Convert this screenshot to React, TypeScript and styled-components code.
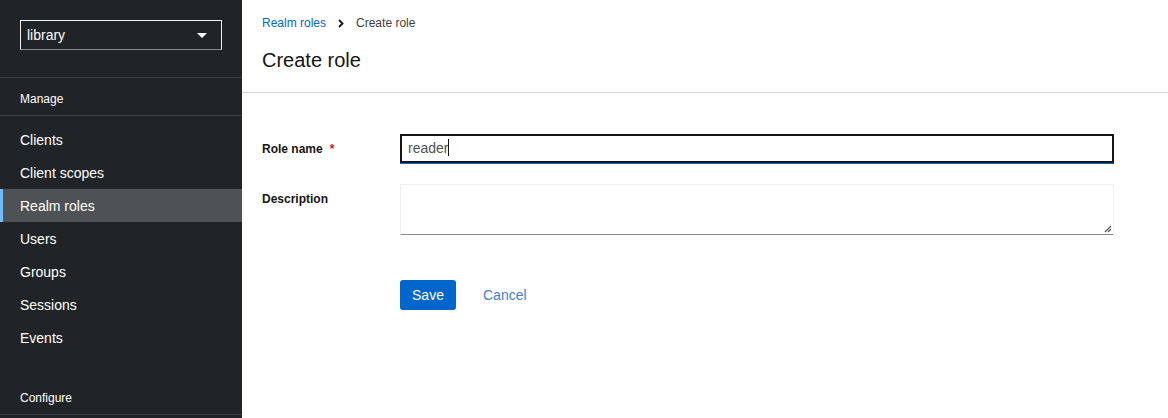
import React from "react";
import styled, { createGlobalStyle } from "styled-components";

const Global = createGlobalStyle`
  html, body { margin: 0; padding: 0; }
  body { font-family: "Liberation Sans", Arial, sans-serif; background: #fff; }
  * { box-sizing: border-box; }
`;

const Page = styled.div`
  display: flex;
  width: 1168px;
  height: 418px;
  overflow: hidden;
`;

const Sidebar = styled.aside`
  width: 242px;
  flex: none;
  background: #212427;
  color: #f0f0f0;
  display: flex;
  flex-direction: column;
`;

const SelectArea = styled.div`
  padding: 20px 20px 27px;
  border-bottom: 1px solid #3c3f42;
`;

const Select = styled.div`
  height: 30px;
  border: 1px solid #f0f0f0;
  border-bottom-color: #8a8d90;
  display: flex;
  align-items: center;
  justify-content: space-between;
  padding: 0 14px 0 6px;
  font-size: 14px;
  color: #fff;
`;

const Caret = styled.span`
  width: 0;
  height: 0;
  border-left: 5px solid transparent;
  border-right: 5px solid transparent;
  border-top: 5px solid #fff;
`;

const SectionTitle = styled.div<{ $divider?: boolean }>`
  height: 38px;
  display: flex;
  align-items: center;
  padding: 5px 0 0 20px;
  font-size: 12px;
  color: #fff;
  border-bottom: ${(p) => (p.$divider ? "1px solid #3c3f42" : "none")};
`;

const Nav = styled.nav`
  padding: 7px 0 26px;
  display: flex;
  flex-direction: column;
`;

const NavItem = styled.div<{ $active?: boolean }>`
  height: 33px;
  display: flex;
  align-items: center;
  padding-left: 20px;
  font-size: 14px;
  color: #fff;
  background: ${(p) => (p.$active ? "#4f5255" : "transparent")};
  box-shadow: ${(p) => (p.$active ? "inset 3px 0 0 #73bcf7" : "none")};
`;

const ConfigureSection = styled.div`
  border-bottom: 1px solid #3c3f42;
  height: 35px;
  display: flex;
  align-items: center;
  padding: 2px 0 0 20px;
  font-size: 12px;
  color: #fff;
`;

const Main = styled.main`
  flex: 1;
  display: flex;
  flex-direction: column;
  background: #fff;
`;

const Header = styled.header`
  padding: 14px 20px 17px;
  border-bottom: 1px solid #d2d2d2;
`;

const Breadcrumb = styled.div`
  display: flex;
  align-items: center;
  gap: 9px;
  font-size: 12px;
  line-height: 18px;
  color: #3c3f42;
`;

const Crumb = styled.a`
  color: #0066cc;
  text-decoration: none;
`;

const Chevron = styled.svg`
  display: block;
  margin: 0 3px;
`;

const Title = styled.h1`
  margin: 13px 0 0;
  font-size: 20px;
  font-weight: 400;
  line-height: 30px;
  color: #151515;
`;

const Form = styled.form`
  padding: 41px 54px 0 20px;
  display: grid;
  grid-template-columns: 138px 1fr;
  row-gap: 21px;
`;

const Label = styled.label<{ $top?: boolean }>`
  font-size: 12px;
  font-weight: bold;
  color: #151515;
  display: flex;
  align-items: ${(p) => (p.$top ? "flex-start" : "center")};
  padding-top: ${(p) => (p.$top ? "8px" : "0")};
`;

const Required = styled.span`
  color: #c9190b;
  margin-left: 7px;
  font-weight: bold;
`;

const TextInput = styled.div`
  height: 29px;
  border: 2px solid #151515;
  box-shadow: 0 1px 0 #0066cc;
  display: flex;
  align-items: center;
  padding: 0 6px 2px;
  font-size: 14px;
  color: #4f5255;
`;

const CaretLine = styled.span`
  display: inline-block;
  width: 1px;
  height: 17px;
  background: #151515;
`;

const TextArea = styled.div`
  position: relative;
  height: 51px;
  border: 1px solid #f0f0f0;
  border-bottom: 1px solid #8a8d90;
`;

const Grip = styled.svg`
  position: absolute;
  right: 1px;
  bottom: 1px;
`;

const Actions = styled.div`
  grid-column: 2;
  margin-top: 24px;
  display: flex;
  align-items: center;
  gap: 11px;
`;

const PrimaryButton = styled.button`
  height: 30px;
  width: 56px;
  border: none;
  border-radius: 3px;
  background: #0066cc;
  color: #fff;
  font-family: inherit;
  font-size: 14px;
  padding: 0;
`;

const LinkButton = styled.button`
  border: none;
  background: transparent;
  color: #3f7fd6;
  font-family: inherit;
  font-size: 14px;
  padding: 0 16px;
`;

const navItems = ["Clients", "Client scopes", "Realm roles", "Users", "Groups", "Sessions", "Events"];

export default function App() {
  return (
    <>
      <Global />
      <Page>
        <Sidebar>
          <SelectArea>
            <Select>
              <span>library</span>
              <Caret />
            </Select>
          </SelectArea>
          <SectionTitle $divider>Manage</SectionTitle>
          <Nav>
            {navItems.map((n) => (
              <NavItem key={n} $active={n === "Realm roles"}>
                {n}
              </NavItem>
            ))}
          </Nav>
          <ConfigureSection>Configure</ConfigureSection>
        </Sidebar>
        <Main>
          <Header>
            <Breadcrumb>
              <Crumb href="#">Realm roles</Crumb>
              <Chevron width="6" height="9" viewBox="0 0 6 9">
                <path d="M1 1 L4.5 4.5 L1 8" stroke="#151515" strokeWidth="1.8" fill="none" />
              </Chevron>
              <span>Create role</span>
            </Breadcrumb>
            <Title>Create role</Title>
          </Header>
          <Form onSubmit={(e) => e.preventDefault()}>
            <Label>
              Role name<Required>*</Required>
            </Label>
            <TextInput>
              reader
              <CaretLine />
            </TextInput>
            <Label $top>Description</Label>
            <TextArea>
              <Grip width="9" height="9" viewBox="0 0 9 9">
                <path d="M8 2 L2 8 M8 5 L5 8" stroke="#555" strokeWidth="1.2" fill="none" />
              </Grip>
            </TextArea>
            <Actions>
              <PrimaryButton type="button">Save</PrimaryButton>
              <LinkButton type="button">Cancel</LinkButton>
            </Actions>
          </Form>
        </Main>
      </Page>
    </>
  );
}
